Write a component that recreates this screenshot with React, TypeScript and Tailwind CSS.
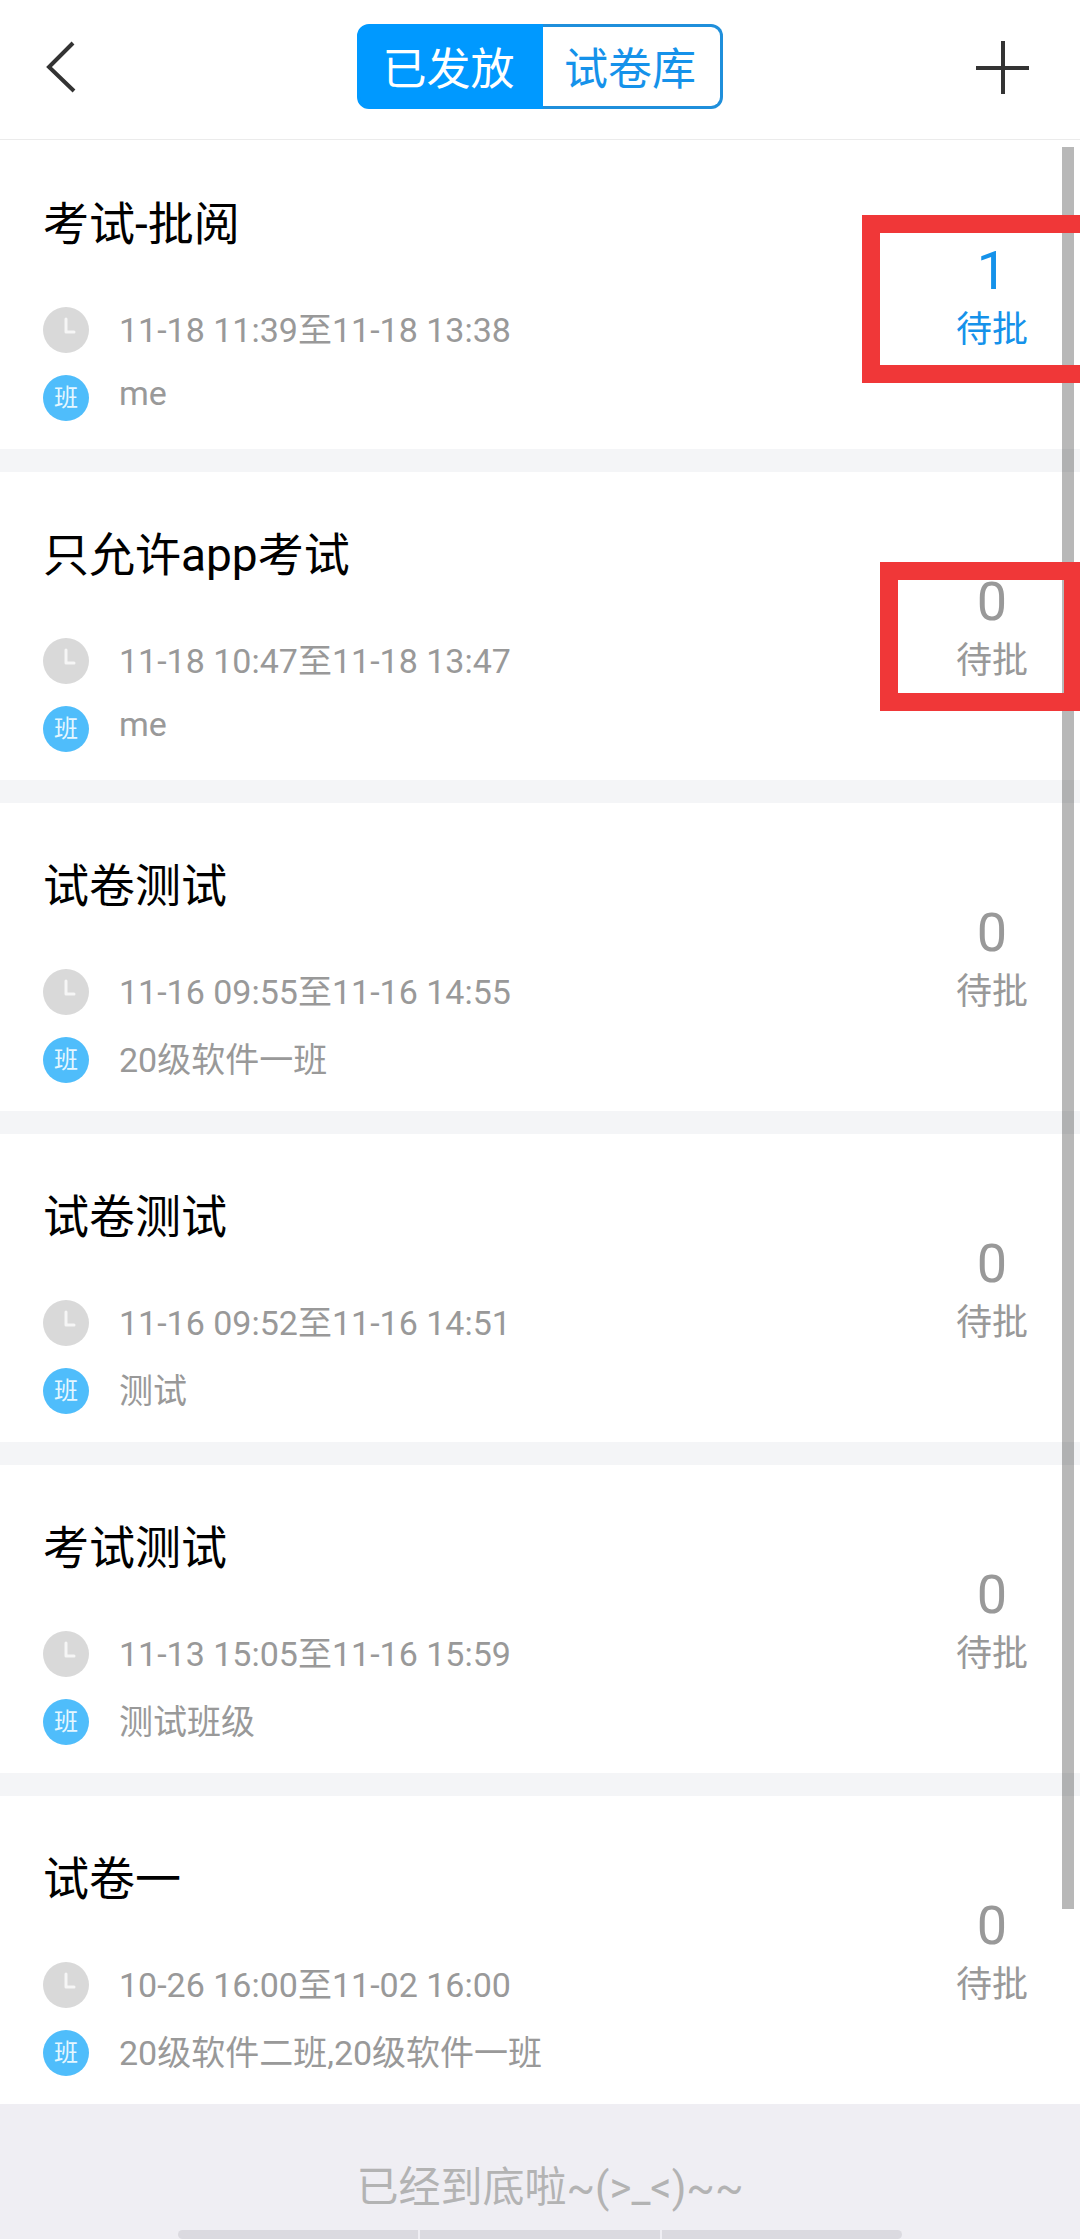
import { Fragment, useState } from 'react';
import clsx from 'clsx';

interface Exam {
	title: string;
	time: string;
	group: string;
	pending: number;
	mark?: string;
}

const exams: Exam[] = [
	{
		title: '考试-批阅',
		time: '11-18 11:39至11-18 13:38',
		group: 'me',
		pending: 1,
		mark: 'top-[74px] w-[218px] h-[168px] border-r-0',
	},
	{
		title: '只允许app考试',
		time: '11-18 10:47至11-18 13:47',
		group: 'me',
		pending: 0,
		mark: 'top-[90px] w-[200px] h-[149px] border-r-[16px]',
	},
	{ title: '试卷测试', time: '11-16 09:55至11-16 14:55', group: '20级软件一班', pending: 0 },
	{ title: '试卷测试', time: '11-16 09:52至11-16 14:51', group: '测试', pending: 0 },
	{ title: '考试测试', time: '11-13 15:05至11-16 15:59', group: '测试班级', pending: 0 },
	{ title: '试卷一', time: '10-26 16:00至11-02 16:00', group: '20级软件二班,20级软件一班', pending: 0 },
];

const tabs = [
	{ label: '已发放', shape: 'w-[186px] rounded-l-xl' },
	{ label: '试卷库', shape: 'w-[180px] rounded-r-xl border-l-0' },
];

function ClockIcon() {
	return (
		<svg viewBox="0 0 46 46" className="size-[46px] shrink-0" aria-hidden="true">
			<circle cx="23" cy="23" r="23" fill="#d9d9d9" />
			<path
				d="M23 12v13h8"
				fill="none"
				stroke="#f6f6f6"
				strokeWidth="3"
				strokeLinecap="round"
				strokeLinejoin="round"
			/>
		</svg>
	);
}

function Header() {
	const [active, setActive] = useState(0);

	return (
		<header className="grid grid-cols-[1fr_auto_1fr] items-center pt-6 pb-[30px] border-b border-[#ebebeb]">
			<button type="button" aria-label="返回" className="ml-[46px] justify-self-start">
				<svg width="30" height="52" viewBox="0 0 30 52" fill="none" stroke="#333" strokeWidth="4">
					<path d="M27 2 3 26l25 24" />
				</svg>
			</button>
			<div className="flex h-[85px]">
				{tabs.map((tab, i) => (
					<button
						key={tab.label}
						type="button"
						onClick={() => setActive(i)}
						className={clsx(
							'border-[3px] pt-[6px] pr-[3px] text-[44px]',
							tab.shape,
							active === i
								? 'border-[#0099ff] bg-[#0099ff] text-white'
								: 'border-[#1f8fdb] text-[#1592ea]',
						)}
					>
						{tab.label}
					</button>
				))}
			</div>
			<button type="button" aria-label="新建" className="mr-[51px] justify-self-end">
				<svg width="54" height="54" viewBox="0 0 54 54" stroke="#333" strokeWidth="4">
					<path d="M28 1v53M1 28h53" />
				</svg>
			</button>
		</header>
	);
}

function ExamItem({ exam }: { exam: Exam }) {
	// latin-only names sit on a shorter line
	const latin = /^[a-z]+$/i.test(exam.group);

	return (
		<li className="relative flex justify-between">
			<div className="pl-[43px] pt-[53px] pb-[26px] text-[34px]">
				<h2 className="text-[46px] leading-[60px] text-black">{exam.title}</h2>
				<div className="mt-[53px] flex min-h-12 items-start gap-[30px]">
					<ClockIcon />
					<span className="leading-[46px]">{exam.time}</span>
				</div>
				<div className="mt-5 flex min-h-12 items-start gap-[30px]">
					<span className="size-[46px] shrink-0 rounded-full bg-[#4fbdfb] text-center text-2xl leading-[46px] text-[#e6f7ff]">
						班
					</span>
					<span className={latin ? 'leading-[36px]' : 'leading-[46px]'}>{exam.group}</span>
				</div>
			</div>
			<div
				className={clsx(
					'w-[176px] shrink-0 pt-[98px] text-center',
					exam.pending > 0 && 'text-[#1592ea]',
				)}
			>
				<p className="text-[54px] leading-[64px]">{exam.pending}</p>
				<p className="mt-1 text-4xl leading-[46px]">待批</p>
			</div>
			{exam.mark && (
				<div className={clsx('absolute right-0 z-20 border-[18px] border-[#f03738]', exam.mark)} />
			)}
		</li>
	);
}

export default function App() {
	return (
		<div className="min-h-screen bg-white pr-1 font-['Roboto','Noto_Sans_CJK_SC',sans-serif]">
			<Header />

			<main className="relative pt-px">
				<ul className="flex flex-col text-[#999]">
					{exams.map((exam, i) => (
						<Fragment key={i}>
							{i > 0 && <li role="separator" className="h-[23px] bg-[#f4f5f7]" />}
							<ExamItem exam={exam} />
						</Fragment>
					))}
				</ul>
				{/* Scroll indicator */}
				<div className="absolute top-[7px] bottom-[195px] right-[6px] z-10 w-3 bg-black/28" />
			</main>

			<footer className="bg-[#efeef3] pt-[54px] text-center text-[#b3b3b3]">
				<p className="pl-5 text-[42px] leading-[60px]">已经到底啦~(&gt;_&lt;)~~</p>
				<div className="mx-auto mt-3 flex w-[67%] gap-[2px] overflow-hidden rounded-full">
					<div className="h-[9px] flex-1 bg-[#dbdae0]" />
					<div className="h-[9px] flex-1 bg-[#dbdae0]" />
					<div className="h-[9px] flex-1 bg-[#dbdae0]" />
				</div>
			</footer>
		</div>
	);
}
